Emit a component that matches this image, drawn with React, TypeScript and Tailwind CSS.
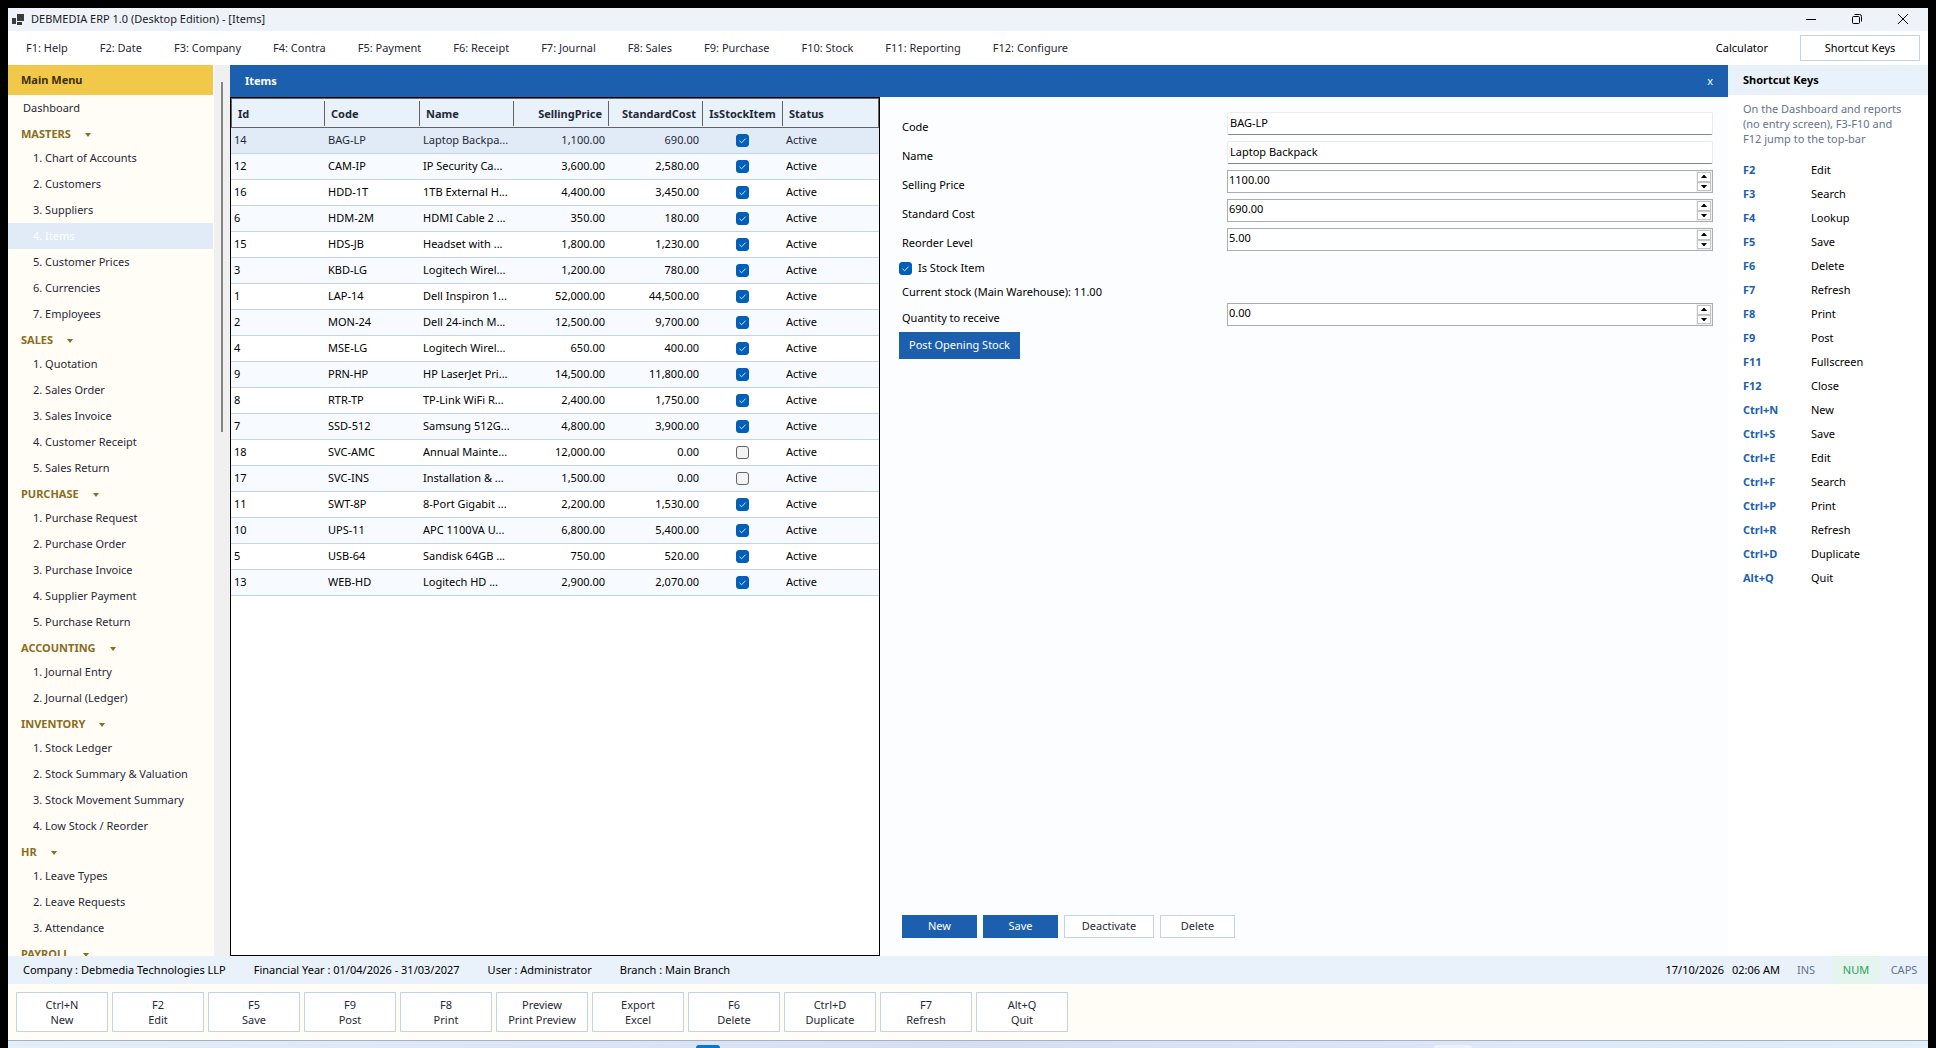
import React, { useState } from 'react'

type MenuSection = {
  title: string
  items: string[]
}

type StockItem = {
  id: number
  code: string
  name: string
  price: string
  cost: string
  stock: boolean
}

const topMenu: string[] = [
  "F1: Help", "F2: Date", "F3: Company", "F4: Contra", "F5: Payment", "F6: Receipt",
  "F7: Journal", "F8: Sales", "F9: Purchase", "F10: Stock", "F11: Reporting", "F12: Configure",
]

const sections: MenuSection[] = [
  { title: "MASTERS", items: ["Chart of Accounts", "Customers", "Suppliers", "Items", "Customer Prices", "Currencies", "Employees"] },
  { title: "SALES", items: ["Quotation", "Sales Order", "Sales Invoice", "Customer Receipt", "Sales Return"] },
  { title: "PURCHASE", items: ["Purchase Request", "Purchase Order", "Purchase Invoice", "Supplier Payment", "Purchase Return"] },
  { title: "ACCOUNTING", items: ["Journal Entry", "Journal (Ledger)"] },
  { title: "INVENTORY", items: ["Stock Ledger", "Stock Summary & Valuation", "Stock Movement Summary", "Low Stock / Reorder"] },
  { title: "HR", items: ["Leave Types", "Leave Requests", "Attendance"] },
  { title: "PAYROLL", items: [] },
]

const stockItems: StockItem[] = [
  { id: 14, code: "BAG-LP", name: "Laptop Backpa...", price: "1,100.00", cost: "690.00", stock: true },
  { id: 12, code: "CAM-IP", name: "IP Security Ca...", price: "3,600.00", cost: "2,580.00", stock: true },
  { id: 16, code: "HDD-1T", name: "1TB External H...", price: "4,400.00", cost: "3,450.00", stock: true },
  { id: 6, code: "HDM-2M", name: "HDMI Cable 2 ...", price: "350.00", cost: "180.00", stock: true },
  { id: 15, code: "HDS-JB", name: "Headset with ...", price: "1,800.00", cost: "1,230.00", stock: true },
  { id: 3, code: "KBD-LG", name: "Logitech Wirel...", price: "1,200.00", cost: "780.00", stock: true },
  { id: 1, code: "LAP-14", name: "Dell Inspiron 1...", price: "52,000.00", cost: "44,500.00", stock: true },
  { id: 2, code: "MON-24", name: "Dell 24-inch M...", price: "12,500.00", cost: "9,700.00", stock: true },
  { id: 4, code: "MSE-LG", name: "Logitech Wirel...", price: "650.00", cost: "400.00", stock: true },
  { id: 9, code: "PRN-HP", name: "HP LaserJet Pri...", price: "14,500.00", cost: "11,800.00", stock: true },
  { id: 8, code: "RTR-TP", name: "TP-Link WiFi R...", price: "2,400.00", cost: "1,750.00", stock: true },
  { id: 7, code: "SSD-512", name: "Samsung 512G...", price: "4,800.00", cost: "3,900.00", stock: true },
  { id: 18, code: "SVC-AMC", name: "Annual Mainte...", price: "12,000.00", cost: "0.00", stock: false },
  { id: 17, code: "SVC-INS", name: "Installation & ...", price: "1,500.00", cost: "0.00", stock: false },
  { id: 11, code: "SWT-8P", name: "8-Port Gigabit ...", price: "2,200.00", cost: "1,530.00", stock: true },
  { id: 10, code: "UPS-11", name: "APC 1100VA U...", price: "6,800.00", cost: "5,400.00", stock: true },
  { id: 5, code: "USB-64", name: "Sandisk 64GB ...", price: "750.00", cost: "520.00", stock: true },
  { id: 13, code: "WEB-HD", name: "Logitech HD ...", price: "2,900.00", cost: "2,070.00", stock: true },
]

const columns = [
  { title: "Id", width: "w-[94px]", align: "text-left" },
  { title: "Code", width: "w-[95px]", align: "text-left" },
  { title: "Name", width: "w-[94px]", align: "text-left" },
  { title: "SellingPrice", width: "w-[95px]", align: "text-right" },
  { title: "StandardCost", width: "w-[94px]", align: "text-right" },
  { title: "IsStockItem", width: "w-20", align: "text-center" },
  { title: "Status", width: "", align: "text-left" },
]

const shortcuts: [string, string][] = [
  ["F2", "Edit"], ["F3", "Search"], ["F4", "Lookup"], ["F5", "Save"], ["F6", "Delete"], ["F7", "Refresh"],
  ["F8", "Print"], ["F9", "Post"], ["F11", "Fullscreen"], ["F12", "Close"], ["Ctrl+N", "New"], ["Ctrl+S", "Save"],
  ["Ctrl+E", "Edit"], ["Ctrl+F", "Search"], ["Ctrl+P", "Print"], ["Ctrl+R", "Refresh"], ["Ctrl+D", "Duplicate"], ["Alt+Q", "Quit"],
]

const actions: [string, string][] = [
  ["Ctrl+N", "New"], ["F2", "Edit"], ["F5", "Save"], ["F9", "Post"], ["F8", "Print"], ["Preview", "Print Preview"],
  ["Export", "Excel"], ["F6", "Delete"], ["Ctrl+D", "Duplicate"], ["F7", "Refresh"], ["Alt+Q", "Quit"],
]

const CheckBox = ({ id, label, defaultChecked }: { id?: string, label?: string, defaultChecked: boolean }) => (
  <span className="relative inline-grid size-[13px] shrink-0">
    <input
      id={id}
      type="checkbox"
      aria-label={label}
      defaultChecked={defaultChecked}
      className="peer size-[13px] appearance-none rounded-[3px] border border-[#636363] bg-[#f3f3f3] checked:border-[#005fb8] checked:bg-[#005fb8]"
    />
    <svg viewBox="0 0 13 13" className="pointer-events-none absolute inset-0 hidden size-[13px] peer-checked:block" fill="none" stroke="#d9e8f6">
      <path d="M3.5 6.8 5.6 8.8 9.6 4.6" />
    </svg>
  </span>
)

const TextField = ({ id, label, value }: { id: string, label: string, value: string }) => (
  <>
    <label htmlFor={id} className="ml-1.5 pt-1.5 leading-[23px]">{label}</label>
    <input
      id={id}
      defaultValue={value}
      className="mx-[3px] my-[3px] h-[23px] min-w-0 rounded-[2px] border border-[#ebebeb] border-b-[#868686] bg-white px-0.5 pb-0.5 outline-none"
    />
  </>
)

const NumberField = ({ id, label, value }: { id: string, label: string, value: string }) => {
  const [amount, setAmount] = useState<string>(value)
  const step = (by: number) => setAmount((Number(amount) + by).toFixed(2))

  return (
    <>
      <label htmlFor={id} className="ml-1.5 pt-1.5 leading-[23px]">{label}</label>
      <div className="mx-[3px] my-[3px] flex h-[23px] min-w-0 border border-[#abadb3] bg-white">
        <input
          id={id}
          value={amount}
          onChange={(e) => setAmount(e.target.value)}
          className="min-w-0 flex-1 bg-transparent px-px pb-[3px] outline-none"
        />
        <div className="flex w-4 flex-col bg-[#f0f0f0] p-px">
          <button type="button" aria-label={`Increase ${label}`} onClick={() => step(1)} className="flex flex-1 items-center justify-center border border-[#c4c4c4] bg-[#fdfdfd]">
            <svg viewBox="0 0 6 3" className="h-[3px] w-1.5"><path d="M2.5 0H3.5L6 3H0Z" /></svg>
          </button>
          <button type="button" aria-label={`Decrease ${label}`} onClick={() => step(-1)} className="flex flex-1 items-center justify-center border border-[#c4c4c4] bg-[#fdfdfd]">
            <svg viewBox="0 0 6 3" className="h-[3px] w-1.5"><path d="M0 0H6L3.5 3H2.5Z" /></svg>
          </button>
        </div>
      </div>
    </>
  )
}

const TitleBar = () => (
  <header className="flex h-[23px] shrink-0 items-center bg-[#eef3fa] pl-1 pr-0.5 text-[#1b1b1b]">
    <svg viewBox="0 0 12 11" className="mr-[7px] h-[11px] w-3" fill="#3b3b3b">
      <path d="M0 4h4v6H0zM5 0h7v7H5zM5 8h5v3H5z" />
    </svg>
    <h1>DEBMEDIA ERP 1.0 (Desktop Edition) - [Items]</h1>
    <div className="ml-auto flex h-[21px] self-start">
      <button type="button" aria-label="Minimize" className="grid w-[46px] place-items-center">
        <svg viewBox="0 0 10 10" className="size-2.5" stroke="#000" fill="none"><path d="M0 5.5h10" /></svg>
      </button>
      <button type="button" aria-label="Restore" className="grid w-[46px] place-items-center">
        <svg viewBox="0 0 10 10" className="size-2.5" stroke="#000" fill="none">
          <rect x="0.5" y="2.5" width="7" height="7" rx="1" />
          <path d="M2.5 0.5H7.5Q9.5 0.5 9.5 2.5V7.5" />
        </svg>
      </button>
      <button type="button" aria-label="Close" className="grid w-[46px] place-items-center">
        <svg viewBox="0 0 10 10" className="size-2.5" stroke="#000" fill="none"><path d="M0 0 10 10M10 0 0 10" /></svg>
      </button>
    </div>
  </header>
)

const TopMenu = () => (
  <nav className="flex h-[34px] shrink-0 items-center bg-white pl-[18px] pr-2 text-[#1f2937]">
    <div className="flex gap-8">
      {topMenu.map((entry) => (
        <button type="button" key={entry}>{entry}</button>
      ))}
    </div>
    <div className="ml-auto flex items-center gap-8 text-black">
      <button type="button">Calculator</button>
      <button type="button" className="h-[26px] w-[120px] border border-[#c5d3e8] bg-white">Shortcut Keys</button>
    </div>
  </nav>
)

const Sidebar = () => (
  <aside className="flex w-[222px] shrink-0 bg-white">
    <div className="flex min-w-0 flex-1 flex-col overflow-hidden bg-[#fffdf5]">
      <h2 className="h-[30px] shrink-0 bg-[#f2c84b] pl-[13px] font-bold leading-[30px] text-[#3a2f0b]">Main Menu</h2>
      <a href="#dashboard" className="shrink-0 pl-[15px] leading-[26px] text-[#1f2937]">Dashboard</a>
      {sections.map((section) => (
        <section key={section.title} className="shrink-0">
          <button type="button" className="flex h-6 items-center gap-3.5 pl-[13px] pt-[3px] font-bold text-[#8a6d1f]">
            {section.title}
            <svg viewBox="0 0 6 4" className="h-1 w-1.5" fill="currentColor"><path d="M0 0H6L3 4Z" /></svg>
          </button>
          <ul>
            {section.items.map((item, index) => (
              <li key={item} className={item === "Items" ? "bg-[#e1ebf8] text-white" : "text-[#1f2937]"}>
                <a href="#menu" className="block pl-[25px] leading-[26px]">{index + 1}. {item}</a>
              </li>
            ))}
          </ul>
        </section>
      ))}
    </div>
    <div className="ml-px w-4 bg-[#f0f0f0] pl-[7px] pt-[17px]">
      <div className="h-[350px] w-0.5 bg-[#858585]"></div>
    </div>
  </aside>
)

const ItemsGrid = () => (
  <div className="w-[650px] shrink-0 border border-black bg-white">
    <table className="w-full table-fixed border-separate border-spacing-0 text-black">
      <thead>
        <tr className="bg-[#e9f1fb] text-[#1f2937]">
          {columns.map((column, index) => (
            <th
              key={column.title}
              className={`${column.width} ${column.align} h-[30px] border-b border-t border-[#646464] p-0 ${index === 0 ? "border-l" : ""} ${index === columns.length - 1 ? "border-r" : ""}`}
            >
              <div className={`h-[25px] px-1.5 leading-[25px] ${index === columns.length - 1 ? "" : "border-r border-[#646464]"}`}>
                {column.title}
              </div>
            </th>
          ))}
        </tr>
      </thead>
      <tbody>
        {stockItems.map((item, index) => (
          <tr
            key={item.id}
            className={`*:h-[26px] *:whitespace-nowrap *:border-b *:border-[#c5d3e8] *:py-0 *:pl-[3px] *:pr-1 ${index === 0 ? "bg-[#e1ebf8] text-[#1f2937]" : index % 2 ? "bg-[#f7fbff]" : "bg-white"}`}
          >
            <td>{item.id}</td>
            <td>{item.code}</td>
            <td>{item.name}</td>
            <td className="text-right">{item.price}</td>
            <td className="text-right">{item.cost}</td>
            <td>
              <div className="flex justify-center">
                <CheckBox label={`${item.code} is stock item`} defaultChecked={item.stock} />
              </div>
            </td>
            <td>Active</td>
          </tr>
        ))}
      </tbody>
    </table>
  </div>
)

const ItemForm = () => (
  <form className="flex min-w-0 flex-1 flex-col bg-[#fcfdff] pb-[18px] pl-4 pr-3 pt-3 text-black">
    <div className="grid grid-cols-[2fr_3fr]">
      <TextField id="code" label="Code" value="BAG-LP" />
      <TextField id="name" label="Name" value="Laptop Backpack" />
      <NumberField id="price" label="Selling Price" value="1100.00" />
      <NumberField id="cost" label="Standard Cost" value="690.00" />
      <NumberField id="reorder" label="Reorder Level" value="5.00" />
      <div className="col-span-2 ml-[3px] flex h-7 items-center gap-1.5">
        <CheckBox id="is-stock" defaultChecked={true} />
        <label htmlFor="is-stock">Is Stock Item</label>
      </div>
      <p className="col-span-2 ml-1.5 h-[18px] leading-5">Current stock (Main Warehouse): 11.00</p>
      <NumberField id="quantity" label="Quantity to receive" value="0.00" />
    </div>
    <div className="px-[3px] pt-[3px]">
      <button type="button" className="h-[27px] w-[121px] bg-[#1c5fae] text-white">Post Opening Stock</button>
    </div>
    <div className="mt-auto flex gap-1.5 pl-1.5">
      <button type="button" className="h-[23px] w-[75px] bg-[#1c5fae] text-white">New</button>
      <button type="button" className="h-[23px] w-[75px] bg-[#1c5fae] text-white">Save</button>
      <button type="button" className="h-[23px] w-[90px] border border-[#c5d3e8] bg-white text-[#1f2937]">Deactivate</button>
      <button type="button" className="h-[23px] w-[75px] border border-[#c5d3e8] bg-white text-[#1f2937]">Delete</button>
    </div>
  </form>
)

const ShortcutPanel = () => (
  <aside className="w-[200px] shrink-0 bg-white text-black">
    <h2 className="h-[30px] bg-[#e9f1fb] pl-[15px] font-bold leading-[30px]">Shortcut Keys</h2>
    <p className="pl-[15px] pt-1.5 leading-[15px] text-[#64748b]">
      On the Dashboard and reports<br />
      (no entry screen), F3-F10 and<br />
      F12 jump to the top-bar
    </p>
    <dl className="grid grid-cols-[68px_1fr] pl-[15px] pt-3 leading-6">
      {shortcuts.map(([keys, action]) => (
        <React.Fragment key={keys}>
          <dt className="font-bold text-[#1c5fae]">{keys}</dt>
          <dd>{action}</dd>
        </React.Fragment>
      ))}
    </dl>
  </aside>
)

const StatusBar = () => (
  <div className="flex h-7 shrink-0 items-center bg-[#e9f1fb] pl-[15px] text-black">
    <div className="flex gap-7">
      <span>Company : Debmedia Technologies LLP</span>
      <span>Financial Year : 01/04/2026 - 31/03/2027</span>
      <span>User : Administrator</span>
      <span>Branch : Main Branch</span>
    </div>
    <div className="ml-auto flex h-full items-center text-center text-[#64748b]">
      <span className="mr-2 text-black">17/10/2026</span>
      <span className="text-black">02:06 AM</span>
      <span className="w-[52px]">INS</span>
      <span className="h-full w-12 bg-[#e3f5ec] leading-7 text-[#2f9e5f]">NUM</span>
      <span className="w-12">CAPS</span>
    </div>
  </div>
)

const App = () => {
  return (
    <div className="flex h-screen flex-col overflow-hidden bg-black px-2 pt-2 font-['Noto_Sans','Open_Sans',sans-serif] text-[11px]">
      <TitleBar />
      <TopMenu />

      <div className="flex min-h-0 flex-1">
        <Sidebar />
        <main className="flex min-w-0 flex-1 flex-col">
          <div className="flex h-8 shrink-0 items-center justify-between bg-[#1c5fae] pl-[15px] pr-[15px] text-white">
            <h2 className="font-bold">Items</h2>
            <button type="button" aria-label="Close Items">x</button>
          </div>
          <div className="flex min-h-0 flex-1">
            <ItemsGrid />
            <ItemForm />
          </div>
        </main>
        <ShortcutPanel />
      </div>

      <StatusBar />
      <div className="flex h-14 shrink-0 items-center gap-1 bg-[#fffdf5] px-2 text-[#1f2937]">
        {actions.map(([keys, action]) => (
          <button type="button" key={keys} className="h-10 w-[92px] border border-[#c5d3e8] bg-white leading-[15px]">
            {keys}<br />{action}
          </button>
        ))}
      </div>

      {/* top edge of the desktop taskbar */}
      <div className="flex h-2 shrink-0 items-end border-t border-[#a9b0be] bg-linear-to-r from-[#e4eef9] via-[#d6def5] to-[#e2eefa]">
        <div className="ml-[688px] h-[3px] w-6 rounded-t-md bg-[#0078d4]"></div>
        <div className="ml-auto mr-[456px] h-[3px] w-[38px] rounded-t-sm bg-[#eef1f9]"></div>
      </div>
    </div>
  )
}

export default App
